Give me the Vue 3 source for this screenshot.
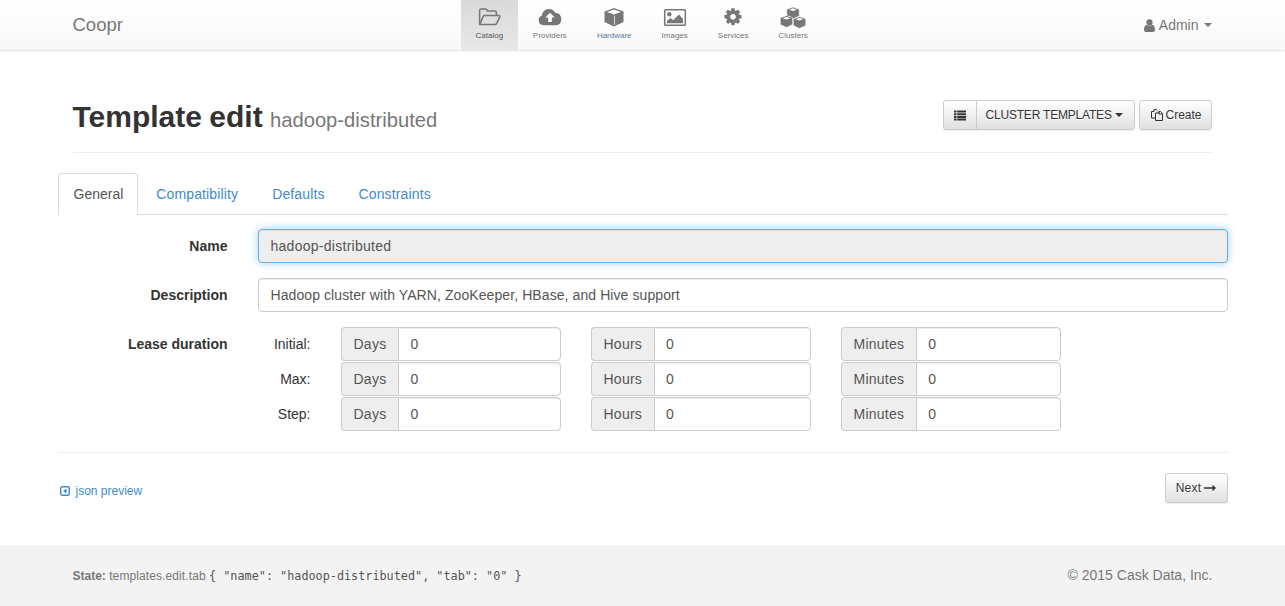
<script setup>
const navItems = [
  { name: 'Catalog', icon: 'folder', active: true },
  { name: 'Providers', icon: 'cloud' },
  { name: 'Hardware', icon: 'cube', link: true },
  { name: 'Images', icon: 'picture' },
  { name: 'Services', icon: 'cog' },
  { name: 'Clusters', icon: 'cubes' },
]
const tabs = ['General', 'Compatibility', 'Defaults', 'Constraints']
const leaseRows = ['Initial:', 'Max:', 'Step:']
const units = ['Days', 'Hours', 'Minutes']
</script>

<template>
  <div class="page">
    <header class="navbar">
      <div class="container nav-inner">
        <a class="brand">Coopr</a>
        <nav class="nav-center">
          <a v-for="item in navItems" :key="item.name" class="nav-item" :class="{ active: item.active, link: item.link }">
            <svg v-if="item.icon === 'folder'" class="nav-icon" width="24" height="20" viewBox="0 0 24 20">
              <path d="M2.600 17.500V3.600q0-1.600 1.600-1.600h4q1 0 1.600.8l.7 1.200h7.200q1.700 0 1.700 1.700V8" fill="none" stroke="#777" stroke-width="1.500"/>
              <path d="M2.700 17.600l3.400-8q.4-1 1.500-1h14.200q1.600 0 .9 1.500l-3 6.300q-.6 1.200-1.900 1.200z" fill="none" stroke="#777" stroke-width="1.500" stroke-linejoin="round"/>
            </svg>
            <svg v-else-if="item.icon === 'cloud'" class="nav-icon" width="24" height="20" viewBox="0 0 24 20">
              <path d="M6 18.300q-5.300-.2-5.300-5 0-3.500 3.200-4.700Q4.800 2 11 2q4.200 0 6.200 3.700 5.600 0 6.100 6.300 0 6.300-6.300 6.300z" fill="#777"/>
              <path d="M12 5.800l-4.800 4.700h3v4.500h3.600v-4.500h3z" fill="#fff"/>
            </svg>
            <svg v-else-if="item.icon === 'cube'" class="nav-icon" width="24" height="20" viewBox="0 0 24 20">
              <path d="M12 1l9.500 3.500v10.500L12 19.500 2.500 15V4.500z" fill="#777"/>
              <path d="M5 5L12 2.600 19 5 12 7.600z" fill="#fff"/>
              <path d="M12.500 8.800v9" stroke="#f4f4f4" stroke-width=".8"/>
            </svg>
            <svg v-else-if="item.icon === 'picture'" class="nav-icon" width="24" height="20" viewBox="0 0 24 20">
              <rect x="1.700" y="2.700" width="20.600" height="15.600" rx=".8" fill="none" stroke="#777" stroke-width="1.500"/>
              <circle cx="6.300" cy="7.200" r="2.200" fill="#777"/>
              <path d="M4 16.300v-2.300l3.500-3 2.500 2.200 6-5.700 4 4.400v4.400z" fill="#777"/>
            </svg>
            <svg v-else-if="item.icon === 'cog'" class="nav-icon" width="24" height="20" viewBox="-100 -40 1792 1792" fill="#777">
              <path transform="translate(-100 -60)" d="M1152 896q0-106-75-181t-181-75-181 75-75 181 75 181 181 75 181-75 75-181zm512-109v222q0 12-8 23t-20 13l-185 28q-19 54-39 91 35 50 107 138 10 12 10 25t-9 23q-27 37-99 108t-94 71q-12 0-26-9l-138-108q-44 23-91 38-16 136-29 186-7 28-36 28h-222q-14 0-24.500-8.500t-11.500-21.500l-28-184q-49-16-90-37l-141 107q-10 9-25 9-14 0-25-11-126-114-165-168-7-10-7-23 0-12 8-23 15-21 51-66.500t54-70.500q-27-50-41-99l-183-27q-13-2-21-12.500t-8-23.500v-222q0-12 8-23t19-13l186-28q14-46 39-92-40-57-107-138-10-12-10-24 0-10 9-23 26-36 98.500-107.500t94.500-71.500q13 0 26 10l138 107q44-23 91-38 16-136 29-186 7-28 36-28h222q14 0 24.500 8.500t11.500 21.500l28 184q49 16 90 37l142-107q9-9 24-9 13 0 25 10 129 119 165 170 7 8 7 22 0 12-8 23-15 21-51 66.500t-54 70.500q26 50 41 98l183 28q13 2 22 12.500t9 23.500z"/>
            </svg>
            <svg v-else class="nav-icon cubes" width="26" height="22" viewBox="0 0 26 22">
              <g v-for="c in [[13, 1], [6.500, 9.500], [19.500, 10.500]]" :key="c[0]" :transform="`translate(${c[0]} ${c[1]})`">
                <path d="M0 0l6.300 2.300v6.700L0 12l-6.300-3V2.300z" fill="#777" stroke="#fafafa" stroke-width=".7"/>
                <path d="M0 1.300L3.800 2.700 0 4.100-3.800 2.700z" fill="#fff"/>
              </g>
            </svg>
            <span class="nav-label">{{ item.name }}</span>
          </a>
        </nav>
        <a class="user">
          <svg class="user-icon" width="11" height="13" viewBox="0 0 11 13">
            <circle cx="5.500" cy="3.400" r="3.100" fill="#777"/>
            <path d="M0 11q0-4.500 2.500-5.300 1.200 1 3 1t3-1Q11 6.500 11 11q0 2-2 2H2q-2 0-2-2z" fill="#777"/>
          </svg>
          Admin
          <span class="caret user-caret"></span>
        </a>
      </div>
    </header>

    <main class="container main">
      <div class="page-header">
        <h1>Template edit <small>hadoop-distributed</small></h1>
        <div class="actions">
          <div class="btn-group">
            <a class="btn list-btn">
              <svg width="12" height="11" viewBox="0 0 12 11" fill="#333">
                <path d="M0 .500h2.500v2H0zM3.200 .500H12v2H3.200zM0 3.200h2.500v2H0zM3.200 3.200H12v2H3.200zM0 5.900h2.500v2H0zM3.200 5.900H12v2H3.200zM0 8.600h2.500v2H0zM3.200 8.600H12v2H3.200z"/>
              </svg>
            </a>
            <a class="btn cluster-btn">CLUSTER TEMPLATES <span class="caret dark-caret"></span></a>
          </div>
          <a class="btn create-btn">
            <svg width="12" height="12" viewBox="0 0 12 12" fill="none" stroke="#333" stroke-width="1">
              <path d="M.5 2.500h2.500V.5h2.200l1.300 1.300M.5 2.500v6.500H4.500M4.500 4h3.500V2.500h1.500l2 2V11.500H4.500zM8 2.500V5h3.500"/>
            </svg>
            Create
          </a>
        </div>
      </div>

      <ul class="tabs">
        <li v-for="(tab, i) in tabs" :key="tab" class="tab" :class="{ active: i === 0 }">{{ tab }}</li>
      </ul>

      <form class="form" @submit.prevent>
        <div class="form-row">
          <label class="field-label">Name</label>
          <input class="control focused" readonly value="hadoop-distributed" />
        </div>
        <div class="form-row">
          <label class="field-label">Description</label>
          <input class="control" readonly value="Hadoop cluster with YARN, ZooKeeper, HBase, and Hive support" />
        </div>
        <div class="form-row lease">
          <label class="field-label">Lease duration</label>
          <div class="lease-rows">
            <div v-for="row in leaseRows" :key="row" class="lease-row">
              <span class="lease-name">{{ row }}</span>
              <div v-for="unit in units" :key="unit" class="input-group">
                <span class="addon">{{ unit }}</span>
                <input class="group-input" readonly value="0" />
              </div>
            </div>
          </div>
        </div>
      </form>

      <hr class="divider" />

      <div class="form-foot">
        <a class="json-link">
          <svg width="10" height="10" viewBox="0 0 10 10">
            <rect x=".7" y=".7" width="8.600" height="8.600" rx="1.600" fill="none" stroke="#428bca" stroke-width="1.400"/>
            <path d="M6.500 2.500v5L3 5z" fill="#428bca"/>
          </svg>
          json preview
        </a>
        <a class="btn next-btn">
          Next
          <svg width="12" height="8" viewBox="0 0 12 8" fill="#333"><path d="M0 3.200h8.500V.8L12 4 8.500 7.200V4.800H0z"/></svg>
        </a>
      </div>
    </main>

    <footer class="footer">
      <div class="container footer-inner">
        <div class="state"><strong>State:</strong> <span class="state-name">templates.edit.tab</span> <code>{ "name": "hadoop-distributed", "tab": "0" }</code></div>
        <div class="copy">© 2015 Cask Data, Inc.</div>
      </div>
    </footer>
  </div>
</template>

<style>
html, body { margin: 0; background: #fff; }
</style>

<style scoped>
* { box-sizing: border-box; }
.page {
  font-family: "Liberation Sans", Arial, sans-serif;
  font-size: 14px;
  line-height: 20px;
  color: #333;
  min-height: 606px;
}
.container { width: 1170px; margin: 0 auto; }
.navbar {
  height: 51px;
  background: linear-gradient(to bottom, #fff, #f8f8f8);
  border-bottom: 1px solid #e7e7e7;
  box-shadow: 0 1px 2px rgba(0, 0, 0, .05);
}
.nav-inner {
  display: flex;
  align-items: flex-start;
  padding: 0 16px 0 15px;
  position: relative;
}
.brand { font-size: 18.500px; line-height: 50px; color: #777; width: 388px; }
.nav-center { display: flex; flex: 1; }
.nav-item {
  height: 50px;
  padding: 0 15px;
  display: flex;
  flex-direction: column;
  align-items: center;
  color: #777;
  font-size: 8px;
  line-height: 10px;
}
.nav-item.active {
  background: linear-gradient(to bottom, #d9d9d9, #e8e8e8);
  color: #555;
}
.nav-item.link { color: #5a7a9a; }
.nav-icon { margin-top: 7px; height: 20px; flex: none; }
.nav-icon.cubes { margin-top: 6px; height: 22px; margin-bottom: -1px; }
.nav-label { margin-top: 4px; white-space: nowrap; }
.user { line-height: 50px; color: #777; display: flex; align-items: center; gap: 4px; height: 50px; }
.user-icon { margin-top: 1px; }
.caret {
  display: inline-block;
  width: 0;
  height: 0;
  border-top: 4px solid currentColor;
  border-left: 4px solid transparent;
  border-right: 4px solid transparent;
  vertical-align: middle;
}
.user-caret { margin-left: 1px; }
.dark-caret { margin-left: 0; }
.main { padding-top: 49px; }
.page-header {
  margin: 0 16px 0 15px;
  height: 53px;
  border-bottom: 1px solid #eee;
  display: flex;
  justify-content: space-between;
  align-items: flex-start;
}
h1 {
  margin: 0;
  font-size: 30px;
  line-height: 33px;
  font-weight: 700;
  color: #333;
  word-spacing: -1px;
}
small { font-size: 20.200px; font-weight: 400; color: #777; word-spacing: 0; }
.actions { display: flex; gap: 4px; }
.btn-group { display: flex; }
.btn {
  display: inline-flex;
  align-items: center;
  justify-content: center;
  height: 30px;
  font-size: 12px;
  color: #333;
  border: 1px solid #ccc;
  border-radius: 3px;
  background: linear-gradient(to bottom, #fff, #e0e0e0);
  text-shadow: 0 1px 0 #fff;
  box-shadow: inset 0 1px 0 rgba(255,255,255,.15), 0 1px 1px rgba(0,0,0,.075);
  white-space: nowrap;
}
.list-btn { width: 34px; border-radius: 3px 0 0 3px; }
.cluster-btn {
  width: 159px;
  margin-left: -1px;
  border-radius: 0 3px 3px 0;
  justify-content: flex-start;
  padding-left: 9px;
  gap: 3px;
  letter-spacing: -.2px;
}
.create-btn { width: 73px; gap: 3px; justify-content: flex-start; padding-left: 11px; }
.tabs {
  list-style: none;
  margin: 20px 0 0;
  padding: 0;
  display: flex;
  gap: 2px;
  border-bottom: 1px solid #ddd;
  height: 42px;
}
.tab {
  height: 42px;
  padding: 10px 15px 0;
  border: 1px solid transparent;
  border-bottom: 0;
  color: #428bca;
  border-radius: 4px 4px 0 0;
  letter-spacing: .13px;
}
.tab.active {
  color: #555;
  background: #fff;
  border-color: #ddd;
  height: 42px;
  letter-spacing: 0;
  padding-right: 14px;
}
.form { margin-top: 14px; }
.form-row {
  display: flex;
  align-items: flex-start;
  margin-bottom: 15px;
}
.field-label {
  width: 170px;
  flex: none;
  margin-right: 30px;
  text-align: right;
  font-weight: 700;
  padding-top: 7px;
}
.control {
  flex: 1;
  height: 34px;
  padding: 6px 12px;
  border: 1px solid #ccc;
  border-radius: 4px;
  font: inherit;
  color: #555;
  background: #fff;
  box-shadow: inset 0 1px 1px rgba(0, 0, 0, .075);
  outline: none;
  letter-spacing: .085px;
}
.control.focused {
  background: #eee;
  border-color: #66afe9;
  box-shadow: inset 0 1px 1px rgba(0, 0, 0, .075), 0 0 8px rgba(102, 175, 233, .6);
  letter-spacing: .27px;
}
.lease { margin-bottom: 0; }
.lease-rows { display: flex; flex-direction: column; gap: 1px; }
.lease-row { display: flex; align-items: center; }
.lease-name { width: 53px; text-align: right; margin-right: 30px; }
.input-group { display: flex; width: 220px; height: 34px; margin-right: 30px; }
.addon {
  padding: 6px 12px;
  background: #eee;
  border: 1px solid #ccc;
  border-right: 0;
  border-radius: 4px 0 0 4px;
  color: #555;
  letter-spacing: .25px;
}
.group-input {
  flex: 1;
  min-width: 0;
  padding: 6px 12px 6px 11px;
  border: 1px solid #ccc;
  border-radius: 0 4px 4px 0;
  font: inherit;
  color: #555;
  box-shadow: inset 0 1px 1px rgba(0, 0, 0, .075);
  outline: none;
}
.divider { margin: 21px 0 20px; border: 0; border-top: 1px solid #eee; }
.form-foot { display: flex; justify-content: space-between; align-items: center; height: 30px; padding-left: 2px; }
.json-link { color: #428bca; font-size: 12px; display: flex; align-items: center; gap: 6px; padding-top: 5px; }
.next-btn { width: 63px; gap: 3px; letter-spacing: .2px; }
.footer {
  margin-top: 42px;
  height: 61px;
  background: #f3f3f3;
}
.footer-inner { display: flex; justify-content: space-between; align-items: center; height: 60px; padding: 0 15px; }
.state { font-size: 12px; color: #777; padding-top: 1px; }
.state strong { color: #777; }
.state-name { letter-spacing: .1px; }
code { font-family: "DejaVu Sans Mono", monospace; font-size: 11.800px; color: #555; }
.copy { color: #777; margin-top: -1px; }
</style>
